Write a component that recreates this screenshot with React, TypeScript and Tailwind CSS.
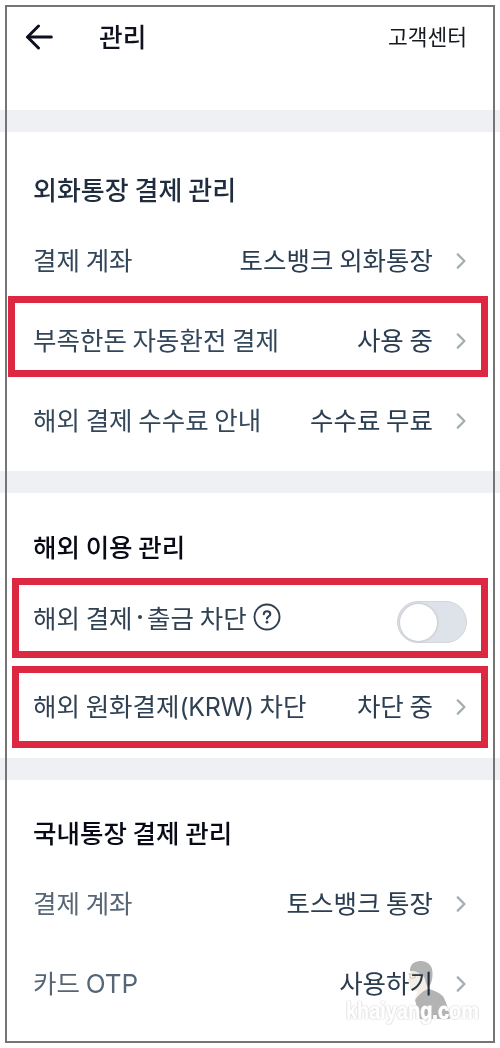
import { useState } from "react";
import type { ReactNode } from "react";

function ArrowLeft() {
  return (
    <svg className="w-[28px] h-[26px] shrink-0" viewBox="0 0 28 26" fill="none" stroke="#0d1020" strokeWidth="3" strokeLinecap="round" strokeLinejoin="round">
      <path d="M13.5 2 L2.5 13 L13.5 24" />
      <path d="M3 13 H26.3" />
    </svg>
  );
}

function Chevron() {
  return (
    <svg className="w-[11px] h-[16px] shrink-0 mt-[3px]" viewBox="0 0 11 16" fill="none" stroke="#a4adb0" strokeWidth="2.3" strokeLinecap="round" strokeLinejoin="round">
      <path d="M1.8 1.4 L8.4 8 L1.8 14.6" />
    </svg>
  );
}

function HelpIcon() {
  return (
    <svg className="w-[28px] h-[28px]" viewBox="0 0 28 28" fill="none" stroke="#2f3f50" strokeLinecap="round">
      <circle cx="14" cy="14" r="12.5" strokeWidth="1.9" />
      <path d="M10.8 11.3 C10.8 9.2 12.1 8.2 14 8.2 C16 8.2 17.3 9.3 17.3 11 C17.3 13.3 14 13.3 14 15.6" strokeWidth="2.1" />
      <circle cx="14" cy="19.2" r="1.4" fill="#2f3f50" stroke="none" />
    </svg>
  );
}

function Latin({ children, className }: { children: ReactNode; className: string }) {
  return <span className={`font-['Inter',sans-serif] leading-none ${className}`}>{children}</span>;
}

function SectionTitle({ children, className }: { children: ReactNode; className: string }) {
  return <h2 className={`h-10 leading-10 px-[33px] font-medium whitespace-nowrap ${className}`}>{children}</h2>;
}

// Row with a thick red frame round it
function HighlightBox({ children, className }: { children: ReactNode; className: string }) {
  return <div className={`border-[7px] border-[#dc2840] flex items-center ${className}`}>{children}</div>;
}

function RowContent({ label, value, labelColor = "text-[#34475a]" }: {
  label: ReactNode;
  value: string;
  labelColor?: string;
}) {
  return (
    <div className="flex-1 flex items-center text-[25.5px] whitespace-nowrap">
      <span className={`flex-1 ${labelColor}`}>{label}</span>
      <span className="mr-[23px] text-[#2b3d50]">{value}</span>
      <Chevron />
    </div>
  );
}

function Row(props: { label: ReactNode; value: string; labelColor?: string }) {
  return (
    <div className="h-20 flex items-center px-[33px]">
      <RowContent {...props} />
    </div>
  );
}

function Divider() {
  return <div className="h-[22px] bg-[#eff0f4]" />;
}

function Watermark() {
  return (
    <div className="absolute left-[345px] top-[960px] w-[134px] h-[66px] pointer-events-none flex flex-col items-start">
      <svg className="w-[48px] h-[60px] ml-[59px] shrink-0 mix-blend-multiply" viewBox="0 0 48 60">
        <path d="M7 9 L6 14 L4 20 L6 23 L6 29 L8 31 L14 31 L11 38 L13 40 L25 28 L24 12 Z" fill="#f3efe6" />
        <path d="M6 9 C7 3 12 1 17 1 C24 1 29 6 28.5 14 C28.5 20 27 25 24 27 C21 24 22 18 19 16 L16 15 C15 12 12 11 6 11 Z" fill="#b3b3b3" />
        <path d="M4.5 14 H16 M6 14 V18 H11 V14" fill="none" stroke="#cfc7b4" strokeWidth="1" />
        <path d="M11 40 C15 34 20 30 25 29 C32 31 38 34 40 38 C43 44 45 52 46 59 L16 59 Z" fill="#b3b3b3" />
      </svg>
      <span className="-mt-[24px] ml-px leading-[30px] text-[24px] font-bold text-white font-['Liberation_Sans',sans-serif] whitespace-nowrap origin-left scale-x-[0.83] [-webkit-text-stroke:0.9px_#ffffff] [text-shadow:0_0_1px_#888,0_0_1px_#999,0_0_2px_#bbb]">
        khaiyang.com
      </span>
    </div>
  );
}

export default function App() {
  const [blocked, setBlocked] = useState(false);

  return (
    <div className="relative w-[500px] h-[1048px] overflow-hidden bg-white font-['Noto_Sans_CJK_KR',sans-serif]">
      {/* Header */}
      <header className="h-[110px] pt-[17px] pl-[25px] pr-[33px]">
        <div className="h-10 flex items-center">
          <ArrowLeft />
          <h1 className="ml-[46px] pb-0.5 flex-1 text-[25.7px] font-medium text-[#11121f]">관리</h1>
          <span className="pb-0.5 text-[21.5px] text-[#16191f]">고객센터</span>
        </div>
      </header>

      <Divider />

      <section className="h-[339px] pt-[37px]">
        <SectionTitle className="text-[26px] text-[#1f2d3e]">외화통장 결제 관리</SectionTitle>
        <div className="pt-[10px] flex flex-col">
          <Row label="결제 계좌" value="토스뱅크 외화통장" />
          <HighlightBox className="h-[81px] -mt-[3px] mb-0.5 ml-2 mr-3 pl-[18px] pr-[14px] pt-[5px]">
            <RowContent label="부족한돈 자동환전 결제" value="사용 중" />
          </HighlightBox>
          <Row label="해외 결제 수수료 안내" value="수수료 무료" />
        </div>
      </section>

      <Divider />

      <section className="h-[264.5px] pt-[33px]">
        <SectionTitle className="text-[25.5px] text-[#080a18]">해외 이용 관리</SectionTitle>
        <div className="px-3 pt-3 flex flex-col gap-2">
          <HighlightBox className="h-20 px-[14px] justify-between">
            <div className="pb-0.5 flex items-center text-[25.5px] text-[#2f4153] whitespace-nowrap">
              <span>해외 결제</span>
              <span className="mx-[5.5px] size-[3.5px] rounded-full bg-[#2f4153]" />
              <span>출금 차단</span>
              <span className="ml-[6px]"><HelpIcon /></span>
            </div>
            <button
              onClick={() => setBlocked(!blocked)}
              className={`mt-2 w-[70px] h-[42px] rounded-full p-[2px] border border-[#d3d7da] flex items-center ${blocked ? "bg-blue-500 justify-end" : "bg-[#dee3e9]"}`}
            >
              <span className="block w-[37px] h-[37px] rounded-full bg-white shadow-[0_0_2px_1px_#c6cbcf]" />
            </button>
          </HighlightBox>
          <HighlightBox className="h-[82px] px-[14px] pb-1">
            <RowContent
              label={<>해외 원화결제<Latin className="text-[25px] tracking-[-0.3px]">(KRW)</Latin> 차단</>}
              value="차단 중"
              labelColor="text-[#2f4153]"
            />
          </HighlightBox>
        </div>
      </section>

      <Divider />

      <section className="pt-[32.5px]">
        <SectionTitle className="text-[25.5px] text-[#080a18]">국내통장 결제 관리</SectionTitle>
        <div className="pt-[10px] flex flex-col">
          <Row label="결제 계좌" value="토스뱅크 통장" labelColor="text-[#566676]" />
          <Row label={<>카드 <Latin className="text-[26px]">OTP</Latin></>} value="사용하기" labelColor="text-[#566676]" />
        </div>
      </section>

      <Watermark />

      {/* Frame line drawn over the page */}
      <div className="absolute left-[5px] top-[5px] w-[490px] h-[1038px] border-2 border-[#757575] pointer-events-none" />
    </div>
  );
}
